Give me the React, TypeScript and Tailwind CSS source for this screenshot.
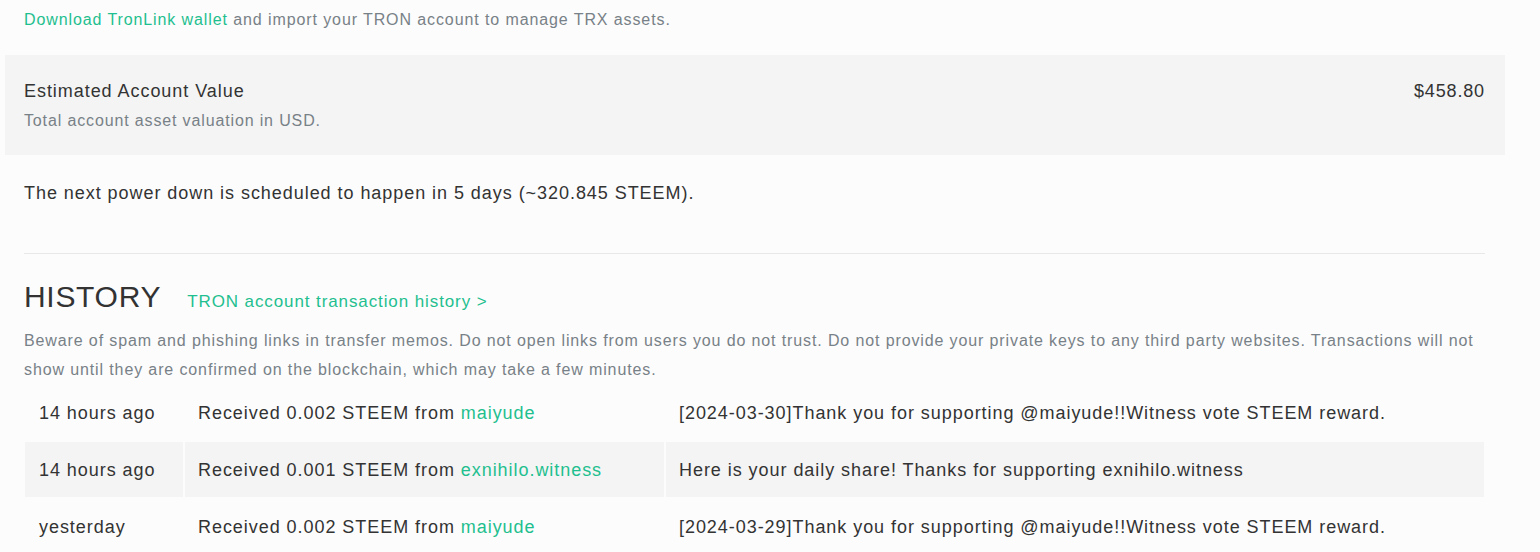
import React from "react";

const font = { fontFamily: '"Liberation Sans", Arial, sans-serif' };

const rows = [
  {
    time: "14 hours ago",
    amount: "Received 0.002 STEEM from ",
    from: "maiyude",
    memo: "[2024-03-30]Thank you for supporting @maiyude!!Witness vote STEEM reward.",
  },
  {
    time: "14 hours ago",
    amount: "Received 0.001 STEEM from ",
    from: "exnihilo.witness",
    memo: "Here is your daily share! Thanks for supporting exnihilo.witness",
  },
  {
    time: "yesterday",
    amount: "Received 0.002 STEEM from ",
    from: "maiyude",
    memo: "[2024-03-29]Thank you for supporting @maiyude!!Witness vote STEEM reward.",
  },
];

export default function App() {
  return (
    <div
      className="w-[1540px] h-[552px] overflow-hidden bg-[#fcfcfc] text-[#333333]"
      style={font}
    >
      <div className="pt-[8px] pl-[24px] text-[16px] leading-[24px] tracking-[0.9px] text-[#788187]">
        <span className="text-[#1fbf8f]">Download TronLink wallet</span> and import your TRON account to manage TRX
        assets.
      </div>

      <div className="mt-[23px] ml-[5px] w-[1500px] h-[100px] bg-[#f4f4f4] pl-[19px] pr-[20px] pt-[24px] flex justify-between">
        <div>
          <div className="text-[18px] leading-[24px] tracking-[0.95px] text-[#333333]">Estimated Account Value</div>
          <div className="mt-[6px] text-[16px] leading-[24px] tracking-[0.86px] text-[#788187]">
            Total account asset valuation in USD.
          </div>
        </div>
        <div className="text-[18px] leading-[24px] tracking-[0.86px] text-[#333333]">$458.80</div>
      </div>

      <div className="ml-[24px] w-[1461px]">
        <div className="mt-[26px] text-[18px] leading-[24px] tracking-[0.95px]">
          The next power down is scheduled to happen in 5 days (~320.845 STEEM).
        </div>

        <div className="mt-[48px] h-px bg-[#e8e8e8]" />

        <div className="mt-[25px] flex items-end">
          <span className="text-[30px] leading-[36px] tracking-[0.7px] text-[#333333]">HISTORY</span>
          <span className="ml-[26px] mb-[1px] text-[17px] leading-[24px] tracking-[0.9px] text-[#1fbf8f]">
            TRON account transaction history &gt;
          </span>
        </div>

        <div className="mt-[11px] text-[16px] leading-[29px] tracking-[0.88px] text-[#788187]">
          Beware of spam and phishing links in transfer memos. Do not open links from users you do not trust. Do not
          provide your private keys to any third party websites. Transactions will not show until they are confirmed on
          the blockchain, which may take a few minutes.
        </div>

        <div className="mt-[1px] ml-[1px] w-[1459px] grid grid-cols-[158px_479px_1fr] gap-[2px] text-[18px] leading-[24px] tracking-[0.95px]">
          {rows.map((r, i) => (
            <React.Fragment key={i}>
              <div className={`h-[55px] flex items-center pl-[14px] ${i === 1 ? "bg-[#f4f4f4]" : ""}`}>{r.time}</div>
              <div className={`h-[55px] flex items-center pl-[13px] ${i === 1 ? "bg-[#f4f4f4]" : ""}`}>
                <span>
                  {r.amount}
                  <span className="text-[#1fbf8f]">{r.from}</span>
                </span>
              </div>
              <div className={`h-[55px] flex items-center pl-[13px] ${i === 1 ? "bg-[#f4f4f4]" : ""}`}>{r.memo}</div>
            </React.Fragment>
          ))}
        </div>
      </div>
    </div>
  );
}
